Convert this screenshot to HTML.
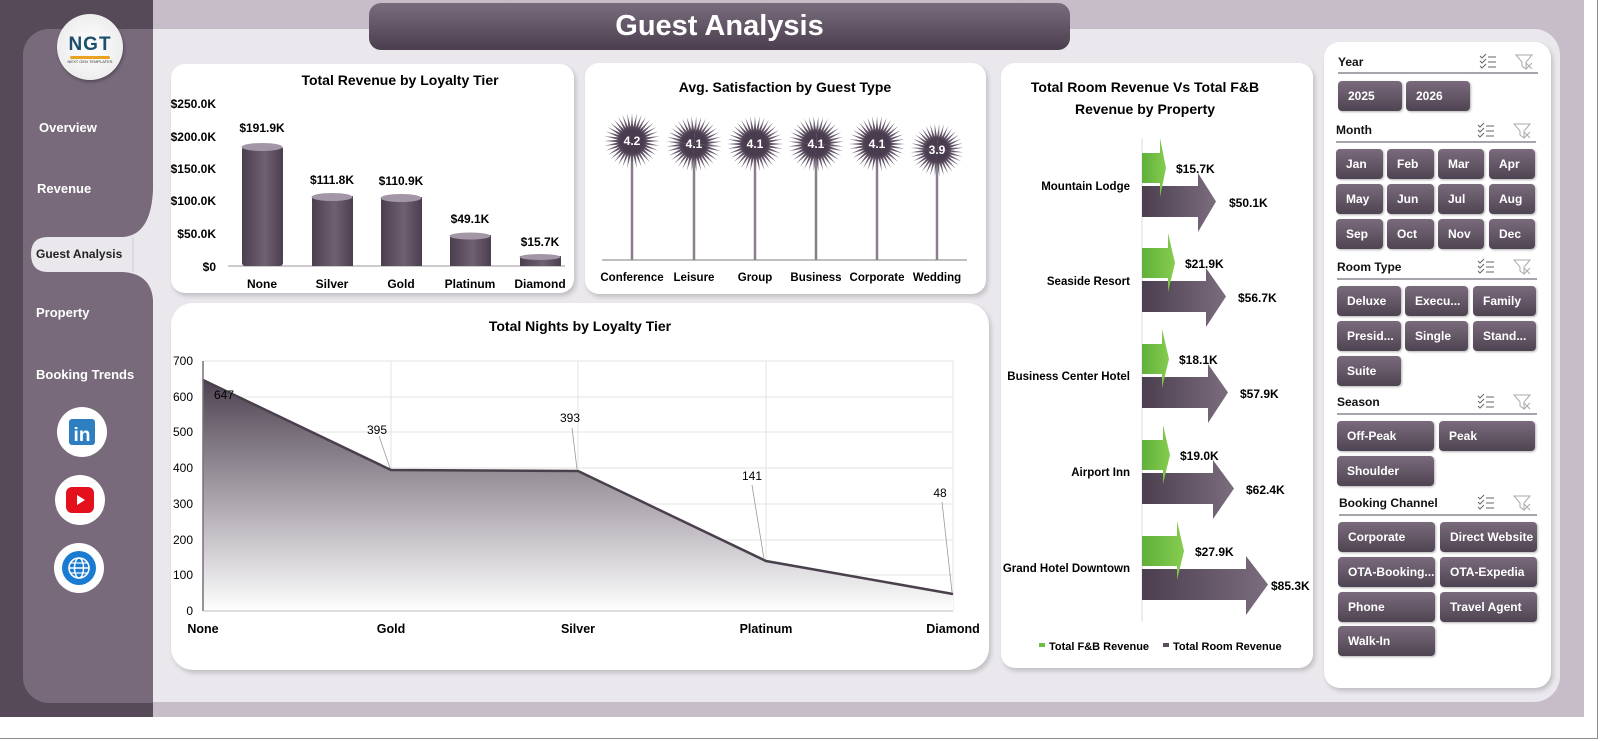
<!DOCTYPE html>
<html><head><meta charset="utf-8"><style>
*{margin:0;padding:0;box-sizing:border-box}
body{width:1600px;height:741px;background:#fff;position:relative;overflow:hidden;font-family:"Liberation Sans",sans-serif}
.a{position:absolute}
.card{position:absolute;background:#fff;border-radius:14px;box-shadow:2px 3px 5px rgba(0,0,0,.18)}
.btn{position:absolute;height:30px;border-radius:4px;background:linear-gradient(#7a6b7c,#4f4452);color:#fff;font-weight:bold;font-size:12px;line-height:30px;padding-left:10px;box-shadow:1px 1px 2px rgba(0,0,0,.3);white-space:nowrap;overflow:hidden}
.lbl{position:absolute;font-size:12px;font-weight:bold;color:#111}
.line{position:absolute;height:2px;background:#a9a3ab}
.nav{position:absolute;color:#fff;font-weight:bold;font-size:13px}
</style></head><body>
<div class="a" style="left:0;top:0;width:1598px;height:739px;border:1px solid #8d8d8d;border-top:none;border-left:none"></div>
<div class="a" style="left:0;top:0;width:153px;height:717px;background:#564a59"></div>
<div class="a" style="left:153px;top:0;width:1431px;height:717px;background:#c6bdc9"></div>
<div class="a" style="left:153px;top:29px;width:1407px;height:673px;background:#eae8ec;border-radius:0 26px 26px 0"></div>
<div class="a" style="left:23px;top:29px;width:130px;height:674px;background:#786a7b;border-radius:26px 0 0 26px"></div>
<svg class="a" style="left:23px;top:190px" width="130" height="110"><path d="M130 0 Q128 45 100 47 L25 47 Q8 47 8 64 Q8 82 25 82 L100 82 Q128 84 130 110 Z" fill="#eae8ec"/><line x1="110" y1="47" x2="110" y2="82" stroke="#cfcbd1"/></svg>
<div class="nav" style="left:39px;top:120px">Overview</div>
<div class="nav" style="left:37px;top:181px">Revenue</div>
<div class="nav" style="left:36px;top:247px;color:#222;font-size:12px">Guest Analysis</div>
<div class="nav" style="left:36px;top:305px">Property</div>
<div class="nav" style="left:36px;top:367px">Booking Trends</div>
<div class="a" style="left:57px;top:14px;width:66px;height:66px;border-radius:50%;background:radial-gradient(#fff,#e6e6e6);box-shadow:1px 2px 3px rgba(0,0,0,.3);text-align:center">
<div style="font-weight:bold;font-size:19px;color:#1c4e6e;margin-top:20px;letter-spacing:1px">NGT</div>
<div style="height:3px;width:40px;margin:0 auto;background:#e7a321;border-radius:2px"></div>
<div style="font-size:4px;color:#333">NEXT GEN TEMPLATES</div></div>
<svg class="a" style="left:54px;top:405px" width="56" height="190">
<circle cx="28" cy="27" r="25" fill="#fff"/><rect x="15" y="14" width="26" height="26" rx="3" fill="#2d7fc1"/><text x="28" y="36" font-size="19" font-weight="bold" fill="#fff" text-anchor="middle" font-family="Liberation Sans">in</text>
<circle cx="26" cy="95" r="25" fill="#fff"/><rect x="12" y="82" width="28" height="26" rx="6" fill="#e4101b"/><path d="M23 90 L31 95 L23 100Z" fill="#fff"/>
<circle cx="25" cy="163" r="25" fill="#fff"/><circle cx="25" cy="163" r="17" fill="#1a7bd1"/><circle cx="25" cy="163" r="10" fill="none" stroke="#fff" stroke-width="1.6"/><ellipse cx="25" cy="163" rx="4.5" ry="10" fill="none" stroke="#fff" stroke-width="1.4"/><line x1="15" y1="163" x2="35" y2="163" stroke="#fff" stroke-width="1.4"/><line x1="17" y1="158" x2="33" y2="158" stroke="#fff" stroke-width="1.2"/><line x1="17" y1="168" x2="33" y2="168" stroke="#fff" stroke-width="1.2"/>
</svg>
<div class="a" style="left:369px;top:3px;width:701px;height:47px;border-radius:12px;background:linear-gradient(#7a6c7d,#4b3f4f);color:#fff;font-weight:bold;font-size:29px;text-align:center;line-height:47px">Guest Analysis</div>

<div class="card" style="left:171px;top:64px;width:403px;height:229px"></div>
<div class="card" style="left:585px;top:63px;width:401px;height:231px"></div>
<div class="card" style="left:1001px;top:63px;width:312px;height:605px"></div>
<div class="card" style="left:171px;top:303px;width:818px;height:367px;border-radius:22px"></div>
<div class="card" style="left:1324px;top:42px;width:227px;height:646px;border-radius:16px"></div>

<svg class="a" style="left:0;top:0" width="1600" height="741" font-family="Liberation Sans">
<defs>
<linearGradient id="cyl" x1="0" x2="1"><stop offset="0" stop-color="#4b3f4f"/><stop offset=".55" stop-color="#6f6072"/><stop offset="1" stop-color="#4b3f4f"/></linearGradient>
<linearGradient id="area" x1="0" y1="0" x2="0" y2="1"><stop offset="0" stop-color="#4e4352"/><stop offset="1" stop-color="#ffffff"/></linearGradient>
<linearGradient id="pur" x1="0" x2="1"><stop offset="0" stop-color="#4b3f4f"/><stop offset="1" stop-color="#7b6c7e"/></linearGradient>
<linearGradient id="grn" x1="0" x2="1"><stop offset="0" stop-color="#5fb03a"/><stop offset="1" stop-color="#86cc4f"/></linearGradient>
<radialGradient id="rg" gradientUnits="userSpaceOnUse" cx="0" cy="0" r="28"><stop offset=".4" stop-color="#4a3c4f"/><stop offset="1" stop-color="#8f8293"/></radialGradient>
<path id="q" d="M0 0 L28 0 L13.9 1.2 L27.6 4.9 L13.5 3.6 L26.3 9.6 L12.7 5.9 L24.2 14 L11.5 8 L21.4 18 L9.9 9.9 L18 21.4 L8 11.5 L14 24.2 L5.9 12.7 L9.6 26.3 L3.6 13.5 L4.9 27.6 L1.2 13.9 L0 28 Z"/>
<g id="star"><use href="#q"/><use href="#q" transform="rotate(90)"/><use href="#q" transform="rotate(180)"/><use href="#q" transform="rotate(270)"/></g>
</defs>
<!-- chart1 -->
<text x="400" y="85" font-size="14" font-weight="bold" text-anchor="middle">Total Revenue  by Loyalty Tier</text>
<g font-size="12" font-weight="bold" text-anchor="end">
<text x="216" y="108">$250.0K</text><text x="216" y="141">$200.0K</text><text x="216" y="173">$150.0K</text><text x="216" y="205">$100.0K</text><text x="216" y="238">$50.0K</text><text x="216" y="271">$0</text></g>
<line x1="228" y1="266" x2="565" y2="266" stroke="#bbb" stroke-width="1.5"/>
<g fill="url(#cyl)">
<rect x="242" y="146" width="41" height="120" rx="3"/><rect x="312" y="196" width="41" height="70"/><rect x="381" y="197" width="41" height="69"/><rect x="450" y="235" width="41" height="31"/><rect x="520" y="256" width="41" height="10"/></g>
<g fill="#a396a6"><ellipse cx="262" cy="147" rx="20.5" ry="4"/><ellipse cx="332" cy="197" rx="20.5" ry="4"/><ellipse cx="401" cy="198" rx="20.5" ry="4"/><ellipse cx="470" cy="236" rx="20.5" ry="3.5"/><ellipse cx="540" cy="257" rx="20.5" ry="3"/></g>
<g font-size="12" font-weight="bold" text-anchor="middle">
<text x="262" y="132">$191.9K</text><text x="332" y="184">$111.8K</text><text x="401" y="185">$110.9K</text><text x="470" y="223">$49.1K</text><text x="540" y="246">$15.7K</text>
<text x="262" y="288">None</text><text x="332" y="288">Silver</text><text x="401" y="288">Gold</text><text x="470" y="288">Platinum</text><text x="540" y="288">Diamond</text></g>
<!-- chart2 -->
<text x="785" y="92" font-size="14" font-weight="bold" text-anchor="middle">Avg. Satisfaction by Guest Type</text>
<line x1="602" y1="260" x2="967" y2="260" stroke="#aaa" stroke-width="1.5"/>
<g stroke="#8a7f8c" stroke-width="2.5"><line x1="632" y1="141" x2="632" y2="260"/><line x1="694" y1="144" x2="694" y2="260"/><line x1="755" y1="144" x2="755" y2="260"/><line x1="816" y1="144" x2="816" y2="260"/><line x1="877" y1="144" x2="877" y2="260"/><line x1="937" y1="150" x2="937" y2="260"/></g>
<g fill="url(#rg)"><use href="#star" transform="translate(632,141)"/><use href="#star" transform="translate(694,144) rotate(5)"/><use href="#star" transform="translate(755,144)"/><use href="#star" transform="translate(816,144) rotate(5)"/><use href="#star" transform="translate(877,144)"/><use href="#star" transform="translate(937,150) rotate(5) scale(.95)"/></g>
<g font-size="12" font-weight="bold" fill="#fff" text-anchor="middle"><text x="632" y="145">4.2</text><text x="694" y="148">4.1</text><text x="755" y="148">4.1</text><text x="816" y="148">4.1</text><text x="877" y="148">4.1</text><text x="937" y="154">3.9</text></g>
<g font-size="11.5" font-weight="bold" text-anchor="middle"><text x="632" y="281">Conference</text><text x="694" y="281">Leisure</text><text x="755" y="281">Group</text><text x="816" y="281">Business</text><text x="877" y="281">Corporate</text><text x="937" y="281">Wedding</text></g>
<!-- chart3 -->
<g font-size="14" font-weight="bold" text-anchor="middle"><text x="1145" y="92">Total Room Revenue Vs Total F&amp;B</text><text x="1145" y="114">Revenue  by Property</text></g>
<line x1="1142" y1="138" x2="1142" y2="622" stroke="#ddd"/>
<g font-size="11.5" font-weight="bold" text-anchor="end">
<text x="1130" y="190">Mountain Lodge</text><text x="1130" y="285">Seaside Resort</text><text x="1130" y="380">Business Center Hotel</text><text x="1130" y="476">Airport Inn</text><text x="1130" y="572">Grand Hotel Downtown</text></g>
<g fill="url(#pur)">
<path d="M1142 186 H1198 V173 L1216 201.5 L1198 232 V217 H1142Z"/>
<path d="M1142 281 H1206 V268 L1226 296.5 L1206 327 V312 H1142Z"/>
<path d="M1142 377 H1208 V364 L1228 392.5 L1208 423 V408 H1142Z"/>
<path d="M1142 473 H1213 V460 L1234 488.5 L1213 519 V504 H1142Z"/>
<path d="M1142 569 H1246 V556 L1268 584.5 L1246 615 V600 H1142Z"/></g>
<g fill="url(#grn)">
<path d="M1142 153 H1160 V138 L1166 168 L1160 197 V183 H1142Z"/>
<path d="M1142 248 H1168 V233 L1175 263 L1168 292 V278 H1142Z"/>
<path d="M1142 344 H1162 V329 L1169 359 L1162 388 V374 H1142Z"/>
<path d="M1142 440 H1163 V425 L1170 455 L1163 484 V470 H1142Z"/>
<path d="M1142 536 H1177 V521 L1184 551 L1177 580 V566 H1142Z"/></g>
<g font-size="12" font-weight="bold">
<text x="1176" y="173">$15.7K</text><text x="1229" y="207">$50.1K</text>
<text x="1185" y="268">$21.9K</text><text x="1238" y="302">$56.7K</text>
<text x="1179" y="364">$18.1K</text><text x="1240" y="398">$57.9K</text>
<text x="1180" y="460">$19.0K</text><text x="1246" y="494">$62.4K</text>
<text x="1195" y="556">$27.9K</text><text x="1271" y="590">$85.3K</text></g>
<rect x="1039" y="643" width="6" height="4" fill="#6fbd44"/><rect x="1163" y="643" width="6" height="4" fill="#5a4d5d"/>
<g font-size="11" font-weight="bold"><text x="1049" y="650">Total F&amp;B Revenue</text><text x="1173" y="650">Total Room Revenue</text></g>
<!-- chart4 -->
<text x="580" y="331" font-size="14" font-weight="bold" text-anchor="middle">Total Nights by Loyalty Tier</text>
<g stroke="#e3e3e3" stroke-width="1"><line x1="203" y1="361" x2="953" y2="361"/><line x1="203" y1="397" x2="953" y2="397"/><line x1="203" y1="432" x2="953" y2="432"/><line x1="203" y1="468" x2="953" y2="468"/><line x1="203" y1="504" x2="953" y2="504"/><line x1="203" y1="540" x2="953" y2="540"/><line x1="203" y1="575" x2="953" y2="575"/><line x1="391" y1="361" x2="391" y2="611"/><line x1="578" y1="361" x2="578" y2="611"/><line x1="766" y1="361" x2="766" y2="611"/><line x1="953" y1="361" x2="953" y2="611"/></g>
<path d="M203 380 L391 470 L578 471 L766 561 L953 594 L953 611 L203 611Z" fill="url(#area)"/>
<path d="M203 380 L391 470 L578 471 L766 561 L953 594" fill="none" stroke="#4a404d" stroke-width="2.5"/>
<line x1="203" y1="361" x2="203" y2="611" stroke="#7a6e7c" stroke-width="1.5"/><line x1="203" y1="611" x2="953" y2="611" stroke="#bbb"/>
<g stroke="#999" stroke-width=".8"><line x1="379" y1="436" x2="390" y2="468"/><line x1="572" y1="428" x2="577" y2="469"/><line x1="752" y1="485" x2="764" y2="559"/><line x1="942" y1="502" x2="952" y2="592"/></g>
<g font-size="12" text-anchor="end"><text x="193" y="365">700</text><text x="193" y="401">600</text><text x="193" y="436">500</text><text x="193" y="472">400</text><text x="193" y="508">300</text><text x="193" y="544">200</text><text x="193" y="579">100</text><text x="193" y="615">0</text></g>
<g font-size="12" text-anchor="middle"><text x="224" y="399">647</text><text x="377" y="434">395</text><text x="570" y="422">393</text><text x="752" y="480">141</text><text x="940" y="497">48</text></g>
<g font-size="12.5" font-weight="bold" text-anchor="middle"><text x="203" y="633">None</text><text x="391" y="633">Gold</text><text x="578" y="633">Silver</text><text x="766" y="633">Platinum</text><text x="953" y="633">Diamond</text></g>
<!-- slicer icons -->
<g id="ic" stroke="#666" stroke-width="1" fill="none">
<path d="M1480 56 l2 2 l4 -4 M1480 61 l2 2 l4 -4 M1480 66 l2 2 l4 -4 M1488 57 h8 M1488 62 h8 M1488 67 h8"/>
<path d="M1516 55 h16 l-6 7 v7 l-4 -3 v-4 z M1526 63 l6 6 M1532 63 l-6 6" stroke="#aaa"/></g>
<use href="#ic" transform="translate(-2,69)"/><use href="#ic" transform="translate(-2,205)"/><use href="#ic" transform="translate(-2,340)"/><use href="#ic" transform="translate(-2,441)"/>
</svg>

<div class="lbl" style="left:1338px;top:55px">Year</div><div class="line" style="left:1338px;top:72px;width:200px"></div>
<div class="btn" style="left:1338px;top:81px;width:64px">2025</div><div class="btn" style="left:1406px;top:81px;width:64px">2026</div>
<div class="lbl" style="left:1336px;top:123px">Month</div><div class="line" style="left:1336px;top:141px;width:200px"></div>
<div class="btn" style="left:1336px;top:149px;width:47px">Jan</div><div class="btn" style="left:1387px;top:149px;width:47px">Feb</div><div class="btn" style="left:1438px;top:149px;width:46px">Mar</div><div class="btn" style="left:1489px;top:149px;width:46px">Apr</div>
<div class="btn" style="left:1336px;top:184px;width:47px">May</div><div class="btn" style="left:1387px;top:184px;width:47px">Jun</div><div class="btn" style="left:1438px;top:184px;width:46px">Jul</div><div class="btn" style="left:1489px;top:184px;width:46px">Aug</div>
<div class="btn" style="left:1336px;top:219px;width:47px">Sep</div><div class="btn" style="left:1387px;top:219px;width:47px">Oct</div><div class="btn" style="left:1438px;top:219px;width:46px">Nov</div><div class="btn" style="left:1489px;top:219px;width:46px">Dec</div>
<div class="lbl" style="left:1337px;top:260px">Room Type</div><div class="line" style="left:1337px;top:278px;width:200px"></div>
<div class="btn" style="left:1337px;top:286px;width:64px">Deluxe</div><div class="btn" style="left:1405px;top:286px;width:63px">Execu...</div><div class="btn" style="left:1473px;top:286px;width:63px">Family</div>
<div class="btn" style="left:1337px;top:321px;width:64px">Presid...</div><div class="btn" style="left:1405px;top:321px;width:63px">Single</div><div class="btn" style="left:1473px;top:321px;width:63px">Stand...</div>
<div class="btn" style="left:1337px;top:356px;width:64px">Suite</div>
<div class="lbl" style="left:1337px;top:395px">Season</div><div class="line" style="left:1337px;top:413px;width:200px"></div>
<div class="btn" style="left:1337px;top:421px;width:97px">Off-Peak</div><div class="btn" style="left:1439px;top:421px;width:96px">Peak</div>
<div class="btn" style="left:1337px;top:456px;width:97px">Shoulder</div>
<div class="lbl" style="left:1339px;top:496px">Booking Channel</div><div class="line" style="left:1339px;top:514px;width:198px"></div>
<div class="btn" style="left:1338px;top:522px;width:97px">Corporate</div><div class="btn" style="left:1440px;top:522px;width:97px">Direct Website</div>
<div class="btn" style="left:1338px;top:557px;width:97px">OTA-Booking....</div><div class="btn" style="left:1440px;top:557px;width:97px">OTA-Expedia</div>
<div class="btn" style="left:1338px;top:592px;width:97px">Phone</div><div class="btn" style="left:1440px;top:592px;width:97px">Travel Agent</div>
<div class="btn" style="left:1338px;top:626px;width:97px">Walk-In</div>
</body></html>
